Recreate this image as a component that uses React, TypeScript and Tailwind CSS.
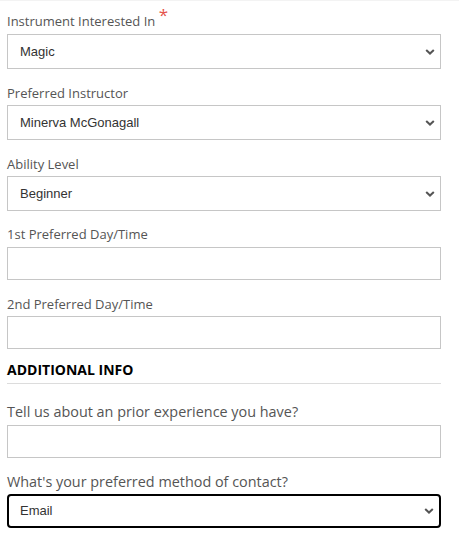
import React from 'react'

const labelCls = "block font-['Open_Sans',sans-serif] text-[13px] leading-[20px] text-[#555]"
const bigLabelCls = "block font-['Open_Sans',sans-serif] text-[14.4px] leading-[20px] text-[#555]"

function Chevron() {
  return (
    <svg width="10" height="7" viewBox="0 0 10 7" className="absolute right-[5px] top-1/2 -translate-y-1/2">
      <path d="M1.2 1.4 L5 5 L8.8 1.4" fill="none" stroke="#555" strokeWidth="2" />
    </svg>
  )
}

function SelectBox({ value, focused }: { value: string; focused?: boolean }) {
  return (
    <div
      className={
        focused
          ? 'relative flex h-[34px] items-center rounded-[4px] border-2 border-black pl-[11px]'
          : 'relative flex h-[35px] items-center border border-[#c6c6c6] pl-[12px]'
      }
    >
      <span className="font-['Liberation_Sans',Arial,sans-serif] text-[13px] text-[#333]">{value}</span>
      <Chevron />
    </div>
  )
}

function TextBox() {
  return <div className="h-[33px] border border-[#c6c6c6] bg-white" />
}

export default function App() {
  return (
    <div className="h-[548px] w-[459px] border-t border-[#f3f3f3] bg-white pl-[7px]">
      <div className="w-[434px]">
        {/* Instrument */}
        <div className="pt-[10px]">
          <label className={labelCls + ' mb-[3px]'}>
            Instrument Interested In{' '}
            <span className="relative top-[-5px] text-[17px] leading-none text-[#e5534b]">*</span>
          </label>
          <SelectBox value="Magic" />
        </div>

        <div className="pt-[14px]">
          <label className={labelCls + ' mb-[2px]'}>Preferred Instructor</label>
          <SelectBox value="Minerva McGonagall" />
        </div>

        <div className="pt-[14px]">
          <label className={labelCls + ' mb-[2px]'}>Ability Level</label>
          <SelectBox value="Beginner" />
        </div>

        <div className="pt-[13px]">
          <label className={labelCls + ' mb-[3px]'}>1st Preferred Day/Time</label>
          <TextBox />
        </div>

        <div className="pt-[14px]">
          <label className={labelCls + ' mb-[2px]'}>2nd Preferred Day/Time</label>
          <TextBox />
        </div>

        {/* Additional info */}
        <div className="pt-[11px]">
          <h3 className="font-['Open_Sans',sans-serif] text-[14px] font-bold leading-[20px] text-black">
            ADDITIONAL INFO
          </h3>
          <div className="mt-[3px] h-px bg-[#dcdcdc]" />
        </div>

        <div className="pt-[18px]">
          <label className={bigLabelCls + ' mb-[3px]'}>Tell us about an prior experience you have?</label>
          <TextBox />
        </div>

        <div className="pt-[14px]">
          <label className={bigLabelCls + ' mb-[2px]'}>What's your preferred method of contact?</label>
          <SelectBox value="Email" focused />
        </div>
      </div>
    </div>
  )
}
